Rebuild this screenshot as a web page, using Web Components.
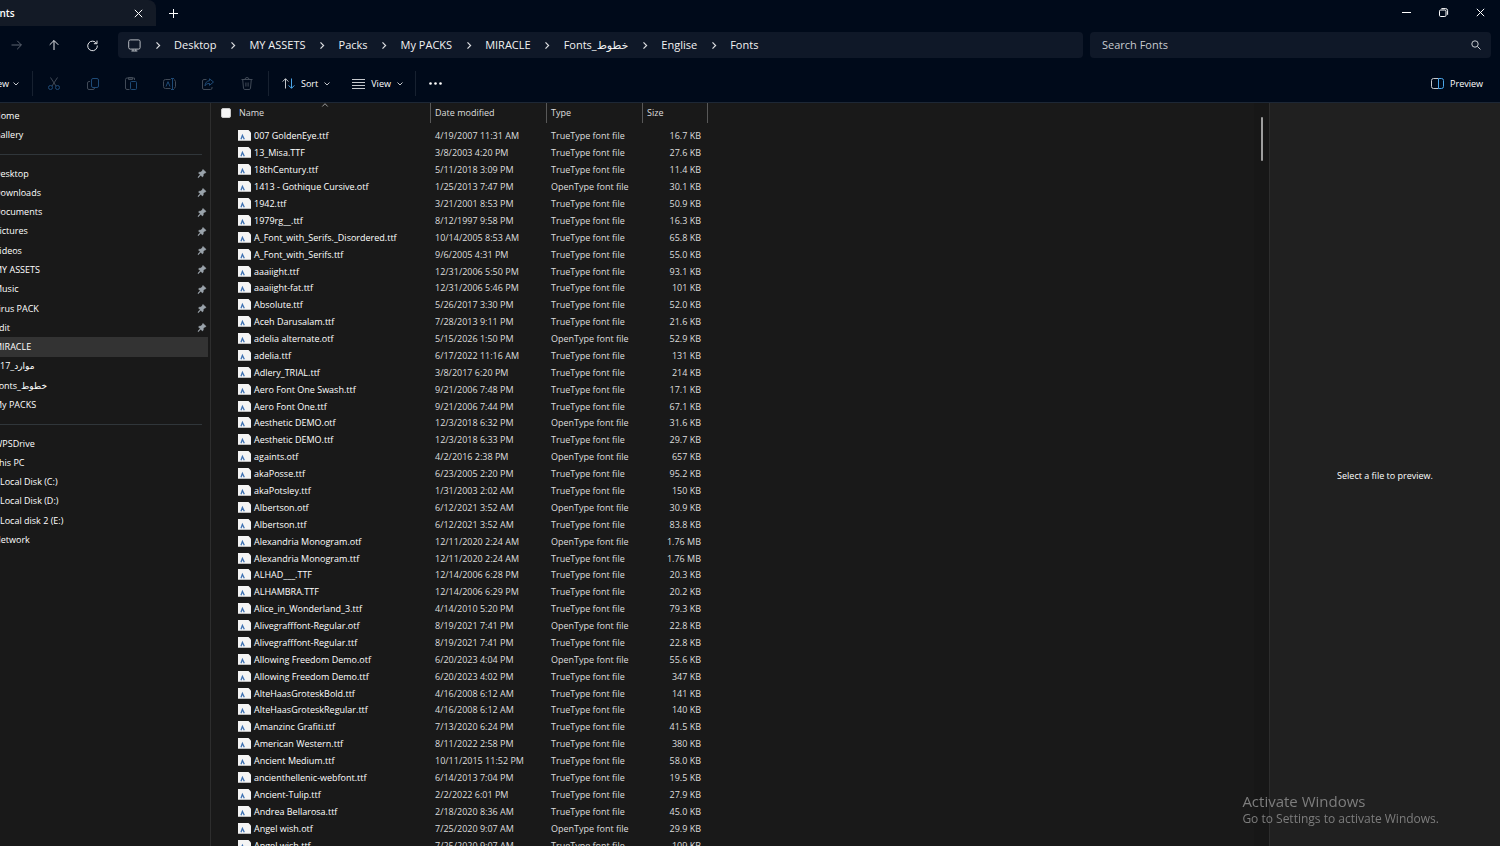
<!DOCTYPE html>
<html lang="en">
<head>
<meta charset="utf-8">
<title>Fonts</title>
<style>
  html, body {
    margin: 0;
    height: 100%;
    overflow: hidden;
    background: #191919;
    color: #fff;
    font: 9px/16px "Open Sans", "Noto Sans", "DejaVu Sans", sans-serif;
  }
</style>
</head>
<body>
<explorer-window></explorer-window>

<script>
const base = /*css*/ `
  :host, * { box-sizing: border-box; }
  button, input { font: inherit; color: inherit; background: none; border: 0; padding: 0; margin: 0; }
  button { display: inline-flex; align-items: center; justify-content: center; }
  a { color: inherit; text-decoration: none; }
  svg { display: block; overflow: visible; }
`;

function define(name, html, setup) {
  const template = document.createElement('template');
  template.innerHTML = html;
  customElements.define(name, class extends HTMLElement {
    connectedCallback() {
      if (this.shadowRoot) return;
      const root = this.attachShadow({ mode: 'open' });
      root.appendChild(template.content.cloneNode(true));
      if (setup) setup(root, this);
    }
  });
}

// name: [width, height, markup]
const icons = {
  close: [9, 9, '<path d="M.8.8 8.2 8.2M8.2.8.8 8.2"/>'],
  plus: [9, 9, '<path d="M4.5 0v9M0 4.5h9"/>'],
  minimize: [9, 9, '<path d="M0 4.5h9"/>'],
  restore: [9, 9, '<rect x=".5" y="2" width="6.5" height="6.5" rx="1.2"/><path d="M2.4.6H6.6a2 2 0 0 1 2 2v4.2"/>'],
  forward: [11, 10, '<path d="M.5 5h9.8M6.2.8 10.4 5 6.2 9.2"/>'],
  up: [10, 10, '<path d="M5 10V.6M.7 4.8 5 .5l4.3 4.3"/>'],
  refresh: [11, 11, '<path d="M9.6 3.4A4.8 4.8 0 1 0 10.3 5.5M10 .6v3.1H6.9"/>'],
  monitor: [13, 13, '<rect x=".7" y=".9" width="11.4" height="9.2" rx="1.6"/><path d="M3.4 12h6M5 10.3V12M7.8 10.3V12"/>'],
  right: [4, 7, '<path d="M.5.4 3.6 3.5.5 6.6" stroke-width="1.2"/>'],
  down: [6, 4, '<path d="M.5.5 3 3 5.5.5"/>'],
  caret: [6, 4, '<path d="M.3 3.5 3 .7l2.7 2.8"/>'],
  search: [10, 10, '<circle cx="4" cy="4" r="3.2"/><path d="M6.4 6.4 9.5 9.5"/>'],
  cut: [12, 13, '<path d="M2.5.5 8 9M9.5.5 4 9"/><g stroke="#1e4a76"><circle cx="2.5" cy="10.5" r="2"/><circle cx="9.5" cy="10.5" r="2"/></g>'],
  copy: [12, 12, '<path d="M3 3.5H2A1.5 1.5 0 0 0 .5 5v5A1.5 1.5 0 0 0 2 11.5h4A1.5 1.5 0 0 0 7.5 10"/><rect x="4.5" y=".5" width="7" height="9" rx="1.5" stroke="#1e4a76"/>'],
  paste: [12, 13, '<path d="M4.5 12.5H2A1.5 1.5 0 0 1 .5 11V2.5A1.5 1.5 0 0 1 2 1h7.5v2M3.5.5h4v2h-4z"/><rect x="5.5" y="4.5" width="6" height="8" rx="1" stroke="#1e4a76"/>'],
  rename: [13, 12, '<path d="M7.5 1.5H2.5a2 2 0 0 0-2 2v5a2 2 0 0 0 2 2h5M11 1.7a2 2 0 0 1 1.5 1.8v5a2 2 0 0 1-1.5 1.8"/><path d="M3 8.5 5 3.7 7 8.5M9.5.5v11M8 .5h3M8 11.5h3" stroke="#1e4a76"/>'],
  share: [12, 12, '<path d="M4.5 1.5H2A1.5 1.5 0 0 0 .5 3v7A1.5 1.5 0 0 0 2 11.5h6.5A1.5 1.5 0 0 0 10 10V9"/><path d="M7.5.8 11.5 4 7.5 7.3V5.4C5.3 5.4 4 6.2 3 7.8 3.2 5 4.7 2.9 7.5 2.7z" stroke="#1e4a76"/>'],
  trash: [12, 13, '<path d="M.5 2.5h11M4 2.5a2 2 0 0 1 4 0M1.7 2.5l.8 8.7a1.4 1.4 0 0 0 1.4 1.3h4.2a1.4 1.4 0 0 0 1.4-1.3l.8-8.7M4.9 5.5v4M7.1 5.5v4"/>'],
  sort: [13, 11, '<path d="M3.5 10.5V.8M.6 3.6 3.5.7l2.9 2.9"/><path d="M9.5.5v9.7M6.6 7.4l2.9 2.9 2.9-2.9" stroke="#4aa5e8"/>'],
  view: [13, 10, '<path d="M0 .5h13M0 3.5h13M0 6.5h13M0 9.5h13"/>'],
  more: [13, 3, '<g fill="currentColor" stroke="none"><circle cx="1.5" cy="1.5" r="1.3"/><circle cx="6.5" cy="1.5" r="1.3"/><circle cx="11.5" cy="1.5" r="1.3"/></g>'],
  pane: [13, 11, '<path d="M7.5.5H2.5a2 2 0 0 0-2 2v6a2 2 0 0 0 2 2h5"/><path d="M7.5.5h3a2 2 0 0 1 2 2v6a2 2 0 0 1-2 2h-3z" stroke="#4aa5e8"/>'],
  pin: [8, 9, '<path fill="currentColor" stroke="currentColor" stroke-width=".5" d="M5 .4 8 3.3 7.4 4.1 6.7 4 5.3 5.5 5.2 7.2 4.4 7.9 2.7 6.2.6 8.6 0 8.6 0 8 2.2 5.7.5 4 1.2 3.2 2.9 3.1 4.4 1.7 4.3 1z"/>'],
  font: [13, 12, '<path fill="#f4f4f4" stroke="none" d="M0 0h10.5L13 2.5V11H0z"/><path fill="#bdbdbd" stroke="none" d="M0 10h13v1H0z"/><path d="M3 9.300 4.400 5.400 6.300 9.300" stroke="#3f72b2" stroke-width="1.300"/>']
};

define('ui-icon', /*html*/ `
<style>
  ${base}
  :host { display: inline-flex; flex: none; }
</style>`, (root, host) => {
  const [w, h, body] = icons[host.getAttribute('name')];
  const holder = document.createElement('template');
  holder.innerHTML = `<svg width="${w}" height="${h}" viewBox="0 0 ${w} ${h}" fill="none" stroke="currentColor" aria-hidden="true">${body}</svg>`;
  root.appendChild(holder.content);
});

define('title-bar', /*html*/ `
<style>
  ${base}
  :host { display: flex; height: 26px; padding-right: 1px; font-weight: 600; }
  .tab {
    display: flex;
    align-items: center;
    justify-content: space-between;
    width: 156px;
    padding-right: 8px;
    background: #131a26;
    border-radius: 0 8px 0 0;
  }
  .tab span { margin-left: -12px; font-size: 10px; }
  button { width: 20px; }
  .add { width: 34px; }
  .window { display: flex; height: 24px; margin-left: auto; }
  .window button { width: 37px; }
</style>
<div class="tab"><span>Fonts</span><button aria-label="Close tab"><ui-icon name="close"></ui-icon></button></div>
<button class="add" aria-label="New tab"><ui-icon name="plus"></ui-icon></button>
<div class="window">
  <button aria-label="Minimize"><ui-icon name="minimize"></ui-icon></button>
  <button aria-label="Restore"><ui-icon name="restore"></ui-icon></button>
  <button aria-label="Close"><ui-icon name="close"></ui-icon></button>
</div>`);

define('address-bar', /*html*/ `
<style>
  ${base}
  :host { display: flex; padding: 6px 9px 0 0; font-size: 11px; }
  .history { display: flex; gap: 6px; margin-right: 10px; }
  .history button { width: 32px; color: #e4e6ea; }
  .history button:disabled { color: #5d6470; }
  nav, .search {
    display: flex;
    align-items: center;
    height: 26px;
    background: #0f1828;
    border-radius: 4px;
  }
  nav { flex: 955; padding-left: 10px; color: #f2f2f2; white-space: nowrap; }
  nav > ui-icon { color: #b8bcc2; }
  nav .sep { display: flex; justify-content: center; width: 33px; color: #dcdde0; }
  .search { flex: 379; margin-left: 7px; padding: 0 10px 0 12px; color: #c8cbd0; }
  input { flex: 1; min-width: 0; outline: 0; }
  input::placeholder { color: inherit; opacity: 1; }
</style>
<div class="history">
  <button disabled aria-label="Forward"><ui-icon name="forward"></ui-icon></button>
  <button aria-label="Up"><ui-icon name="up"></ui-icon></button>
  <button aria-label="Refresh"><ui-icon name="refresh"></ui-icon></button>
</div>
<nav aria-label="Path"><ui-icon name="monitor"></ui-icon></nav>
<div class="search">
  <input type="search" aria-label="Search Fonts" placeholder="Search Fonts">
  <ui-icon name="search"></ui-icon>
</div>`, root => {
  const path = ['Desktop', 'MY ASSETS', 'Packs', 'My PACKS', 'MIRACLE', 'Fonts_خطوط', 'Englise', 'Fonts'];
  root.querySelector('nav').insertAdjacentHTML('beforeend', path.map(part =>
    `<span class="sep"><ui-icon name="right"></ui-icon></span><a href="#">${part}</a>`).join(''));
});

define('command-bar', /*html*/ `
<style>
  ${base}
  :host {
    display: flex;
    align-items: center;
    height: 45px;
    padding: 7px 17px 0 0;
    border-bottom: 1px solid #1d2735;
  }
  hr { width: 1px; height: 25px; margin: 0; border: 0; background: #172130; }
  button { gap: 6px; height: 25px; }
  button ui-icon { color: #c5c8cc; }
  .new { width: 32px; justify-content: flex-end; gap: 4px; padding-right: 13px; }
  .edit { display: flex; justify-content: space-between; width: 225px; margin: 0 5px; }
  .edit button { width: 32px; }
  .edit ui-icon { color: #414a57; }
  .menu { margin-left: 13px; }
  .menu + .menu { margin-left: 22px; }
  .view { margin-right: 12px; }
  .more { width: 39px; }
  .more ui-icon { color: #fff; }
  .preview { margin-left: auto; }
</style>
<button class="new">New<ui-icon name="down"></ui-icon></button>
<hr>
<div class="edit">
  <button disabled aria-label="Cut"><ui-icon name="cut"></ui-icon></button>
  <button disabled aria-label="Copy"><ui-icon name="copy"></ui-icon></button>
  <button disabled aria-label="Paste"><ui-icon name="paste"></ui-icon></button>
  <button disabled aria-label="Rename"><ui-icon name="rename"></ui-icon></button>
  <button disabled aria-label="Share"><ui-icon name="share"></ui-icon></button>
  <button disabled aria-label="Delete"><ui-icon name="trash"></ui-icon></button>
</div>
<hr>
<button class="menu"><ui-icon name="sort"></ui-icon>Sort<ui-icon name="down"></ui-icon></button>
<button class="menu view"><ui-icon name="view"></ui-icon>View<ui-icon name="down"></ui-icon></button>
<hr>
<button class="more" aria-label="See more"><ui-icon name="more"></ui-icon></button>
<button class="preview"><ui-icon name="pane"></ui-icon>Preview</button>`);

define('nav-pane', /*html*/ `
<style>
  ${base}
  :host { display: block; width: 211px; border-right: 1px solid #2d2d2d; overflow: hidden; }
  ul {
    display: grid;
    grid-template-rows: repeat(38, 1fr);
    height: 100%;
    margin: 0;
    padding: 3px 2px 7px 0;
    list-style: none;
  }
  li { display: grid; align-items: center; }
  a {
    display: flex;
    align-items: center;
    justify-content: space-between;
    height: 100%;
    padding-right: 2px;
    white-space: nowrap;
  }
  a span { margin-left: -6px; }
  .inner span { margin-left: 0; }
  .current { background: #333; }
  ui-icon { color: #9aa3ab; }
  hr { width: 100%; height: 1px; margin: 0; border: 0; border-right: 6px solid #191919; background: #30363a; }
</style>
<ul></ul>`, root => {
  const pinned = ['Desktop', 'Downloads', 'Documents', 'Pictures', 'Videos', 'MY ASSETS', 'Music', 'virus PACK', 'Edit'];
  const link = (text, kind = '', icon = '') =>
    `<li><a href="#" class="${kind}"><span>${text}</span>${icon}</a></li>`;
  root.querySelector('ul').innerHTML = [
    link('Home'), link('Gallery'),
    '<li><hr></li>',
    ...pinned.map(text => link(text, '', '<ui-icon name="pin"></ui-icon>')),
    link('MIRACLE', 'current'), link('17_موارد', 'inner'), link('Fonts_خطوط'), link('My PACKS'),
    '<li><hr></li>',
    link('WPSDrive'), link('This PC'),
    link('Local Disk (C:)', 'inner'), link('Local Disk (D:)', 'inner'), link('Local disk 2 (E:)', 'inner'),
    link('Network')
  ].join('');
});

// name | modified | size, the type follows from the extension
const files = `007 GoldenEye.ttf|4/19/2007 11:31 AM|16.7 KB
13_Misa.TTF|3/8/2003 4:20 PM|27.6 KB
18thCentury.ttf|5/11/2018 3:09 PM|11.4 KB
1413 - Gothique Cursive.otf|1/25/2013 7:47 PM|30.1 KB
1942.ttf|3/21/2001 8:53 PM|50.9 KB
1979rg__.ttf|8/12/1997 9:58 PM|16.3 KB
A_Font_with_Serifs._Disordered.ttf|10/14/2005 8:53 AM|65.8 KB
A_Font_with_Serifs.ttf|9/6/2005 4:31 PM|55.0 KB
aaaiight.ttf|12/31/2006 5:50 PM|93.1 KB
aaaiight-fat.ttf|12/31/2006 5:46 PM|101 KB
Absolute.ttf|5/26/2017 3:30 PM|52.0 KB
Aceh Darusalam.ttf|7/28/2013 9:11 PM|21.6 KB
adelia alternate.otf|5/15/2026 1:50 PM|52.9 KB
adelia.ttf|6/17/2022 11:16 AM|131 KB
Adlery_TRIAL.ttf|3/8/2017 6:20 PM|214 KB
Aero Font One Swash.ttf|9/21/2006 7:48 PM|17.1 KB
Aero Font One.ttf|9/21/2006 7:44 PM|67.1 KB
Aesthetic DEMO.otf|12/3/2018 6:32 PM|31.6 KB
Aesthetic DEMO.ttf|12/3/2018 6:33 PM|29.7 KB
againts.otf|4/2/2016 2:38 PM|657 KB
akaPosse.ttf|6/23/2005 2:20 PM|95.2 KB
akaPotsley.ttf|1/31/2003 2:02 AM|150 KB
Albertson.otf|6/12/2021 3:52 AM|30.9 KB
Albertson.ttf|6/12/2021 3:52 AM|83.8 KB
Alexandria Monogram.otf|12/11/2020 2:24 AM|1.76 MB
Alexandria Monogram.ttf|12/11/2020 2:24 AM|1.76 MB
ALHAD___.TTF|12/14/2006 6:28 PM|20.3 KB
ALHAMBRA.TTF|12/14/2006 6:29 PM|20.2 KB
Alice_in_Wonderland_3.ttf|4/14/2010 5:20 PM|79.3 KB
Alivegrafffont-Regular.otf|8/19/2021 7:41 PM|22.8 KB
Alivegrafffont-Regular.ttf|8/19/2021 7:41 PM|22.8 KB
Allowing Freedom Demo.otf|6/20/2023 4:04 PM|55.6 KB
Allowing Freedom Demo.ttf|6/20/2023 4:02 PM|347 KB
AlteHaasGroteskBold.ttf|4/16/2008 6:12 AM|141 KB
AlteHaasGroteskRegular.ttf|4/16/2008 6:12 AM|140 KB
Amanzinc Grafiti.ttf|7/13/2020 6:24 PM|41.5 KB
American Western.ttf|8/11/2022 2:58 PM|380 KB
Ancient Medium.ttf|10/11/2015 11:52 PM|58.0 KB
ancienthellenic-webfont.ttf|6/14/2013 7:04 PM|19.5 KB
Ancient-Tulip.ttf|2/2/2022 6:01 PM|27.9 KB
Andrea Bellarosa.ttf|2/18/2020 8:36 AM|45.0 KB
Angel wish.otf|7/25/2020 9:07 AM|29.9 KB
Angel wish.ttf|7/25/2020 9:07 AM|109 KB`.split('\n').map(line => line.split('|'));

define('file-list', /*html*/ `
<style>
  ${base}
  :host { display: flex; overflow: hidden; }
  table { display: flex; flex-direction: column; flex: 1; height: 100%; }
  thead { display: block; margin-bottom: 5px; }
  tbody { display: grid; grid-auto-rows: 1fr; flex: 1; margin-bottom: -8px; }
  tr { display: grid; grid-template-columns: 220px 116px 96px 65px; align-items: center; }
  th, td { padding: 0 7px 0 4px; text-align: left; font-weight: 400; white-space: nowrap; color: #dedede; }
  th { display: flex; align-items: center; height: 20px; border-right: 1px solid #585858; }
  th:first-child { padding: 0 0 0 10px; }
  th:first-child button { position: relative; flex: 1; height: 20px; margin-left: 8px; justify-content: flex-start; }
  .caret { position: absolute; top: 0; left: 83px; color: #9a9a9a; }
  input { appearance: none; width: 10px; height: 10px; border: 1px solid #c9c9c9; border-radius: 2px; background: #f5f5f5; }
  td:first-child { display: flex; align-items: center; gap: 3px; padding-left: 27px; color: #fff; }
  td:last-child { text-align: right; }
  .scroll { width: 15px; padding: 14px 6px 0 7px; background: #171717; }
  .thumb { height: 44px; border-radius: 1px; background: #9f9f9f; }
</style>
<table>
  <thead>
    <tr>
      <th><input type="checkbox" aria-label="Select all"><button>Name<ui-icon class="caret" name="caret"></ui-icon></button></th>
      <th><button>Date modified</button></th>
      <th><button>Type</button></th>
      <th><button>Size</button></th>
    </tr>
  </thead>
  <tbody></tbody>
</table>
<div class="scroll"><div class="thumb"></div></div>`, root => {
  root.querySelector('tbody').innerHTML = files.map(([name, date, size]) => `
    <tr>
      <td><ui-icon name="font"></ui-icon>${name}</td>
      <td>${date}</td>
      <td>${/otf$/i.test(name) ? 'OpenType' : 'TrueType'} font file</td>
      <td>${size}</td>
    </tr>`).join('');
});

define('preview-pane', /*html*/ `
<style>
  :host {
    display: flex;
    align-items: center;
    justify-content: center;
    width: 231px;
    box-sizing: border-box;
    padding-top: 2px;
    border-left: 1px solid #2d2d2d;
    background: #202020;
  }
</style>
<slot></slot>`);

define('activation-note', /*html*/ `
<style>
  :host { position: fixed; right: 61px; bottom: 18px; color: #7d7d7d; font-size: 12px; line-height: 18px; pointer-events: none; }
  strong { display: block; font-size: 15px; font-weight: 400; }
</style>
<strong>Activate Windows</strong>
<span>Go to Settings to activate Windows.</span>`);

define('explorer-window', /*html*/ `
<style>
  :host { display: flex; flex-direction: column; height: 100vh; }
  header { background: #000a1a; }
  main { display: flex; flex: 1; min-height: 0; }
  file-list { flex: 1; }
</style>
<header>
  <title-bar></title-bar>
  <address-bar></address-bar>
  <command-bar></command-bar>
</header>
<main>
  <nav-pane></nav-pane>
  <file-list></file-list>
  <preview-pane>Select a file to preview.</preview-pane>
</main>
<activation-note></activation-note>`);
</script>
</body>
</html>
